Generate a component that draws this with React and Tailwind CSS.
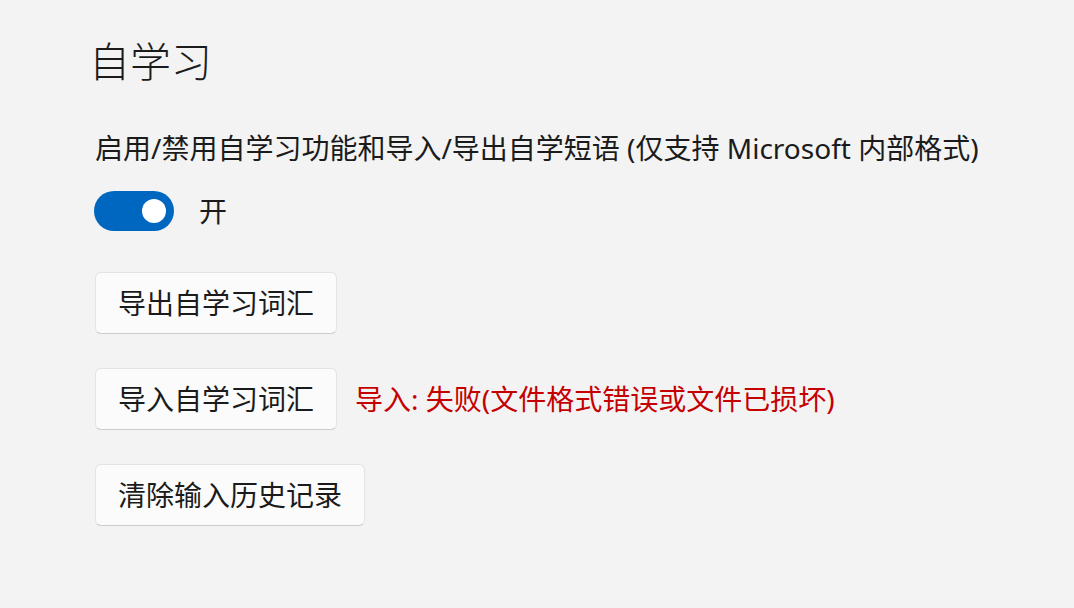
const font = { fontFamily: '"Noto Sans", "Noto Sans CJK SC", sans-serif' };

const ActionButton = ({ children, className = '' }) => (
  <button
    className={`h-[62px] rounded-[6px] border border-[#e3e3e3] border-b-[#cbcbcb] bg-[#fbfbfb] px-[20px] text-[28px] leading-none text-[#1b1b1b] ${className}`}
  >
    {children}
  </button>
);

export default function App() {
  return (
    <div style={font} className="min-h-screen w-full bg-[#f3f3f3] pl-[89px] pt-[35px] text-[#1b1b1b]">
      <h1 className="text-[41px] font-light leading-[52px]">自学习</h1>

      <p className="mt-[46px] pl-[6px] text-[28px] leading-[30px]">
        启用/禁用自学习功能和导入/导出自学短语 (仅支持 Microsoft 内部格式)
      </p>

      <div className="mt-[28px] flex items-center gap-[25px] pl-[5px]">
        <div className="flex h-[40px] w-[80px] items-center justify-end rounded-full bg-[#0067c0] pr-[8px]">
          <div className="h-[24px] w-[24px] rounded-full bg-white" />
        </div>
        <span className="text-[28px] leading-none">开</span>
      </div>

      <div className="mt-[41px] flex flex-col items-start gap-[34px] pl-[6px]">
        <ActionButton className="w-[242px]">导出自学习词汇</ActionButton>
        <div className="flex items-center gap-[18px]">
          <ActionButton className="w-[242px]">导入自学习词汇</ActionButton>
          <span className="text-[28px] leading-none text-[#c40000]">
            导入: 失败(文件格式错误或文件已损坏)
          </span>
        </div>
        <ActionButton className="w-[270px]">清除输入历史记录</ActionButton>
      </div>
    </div>
  );
}
